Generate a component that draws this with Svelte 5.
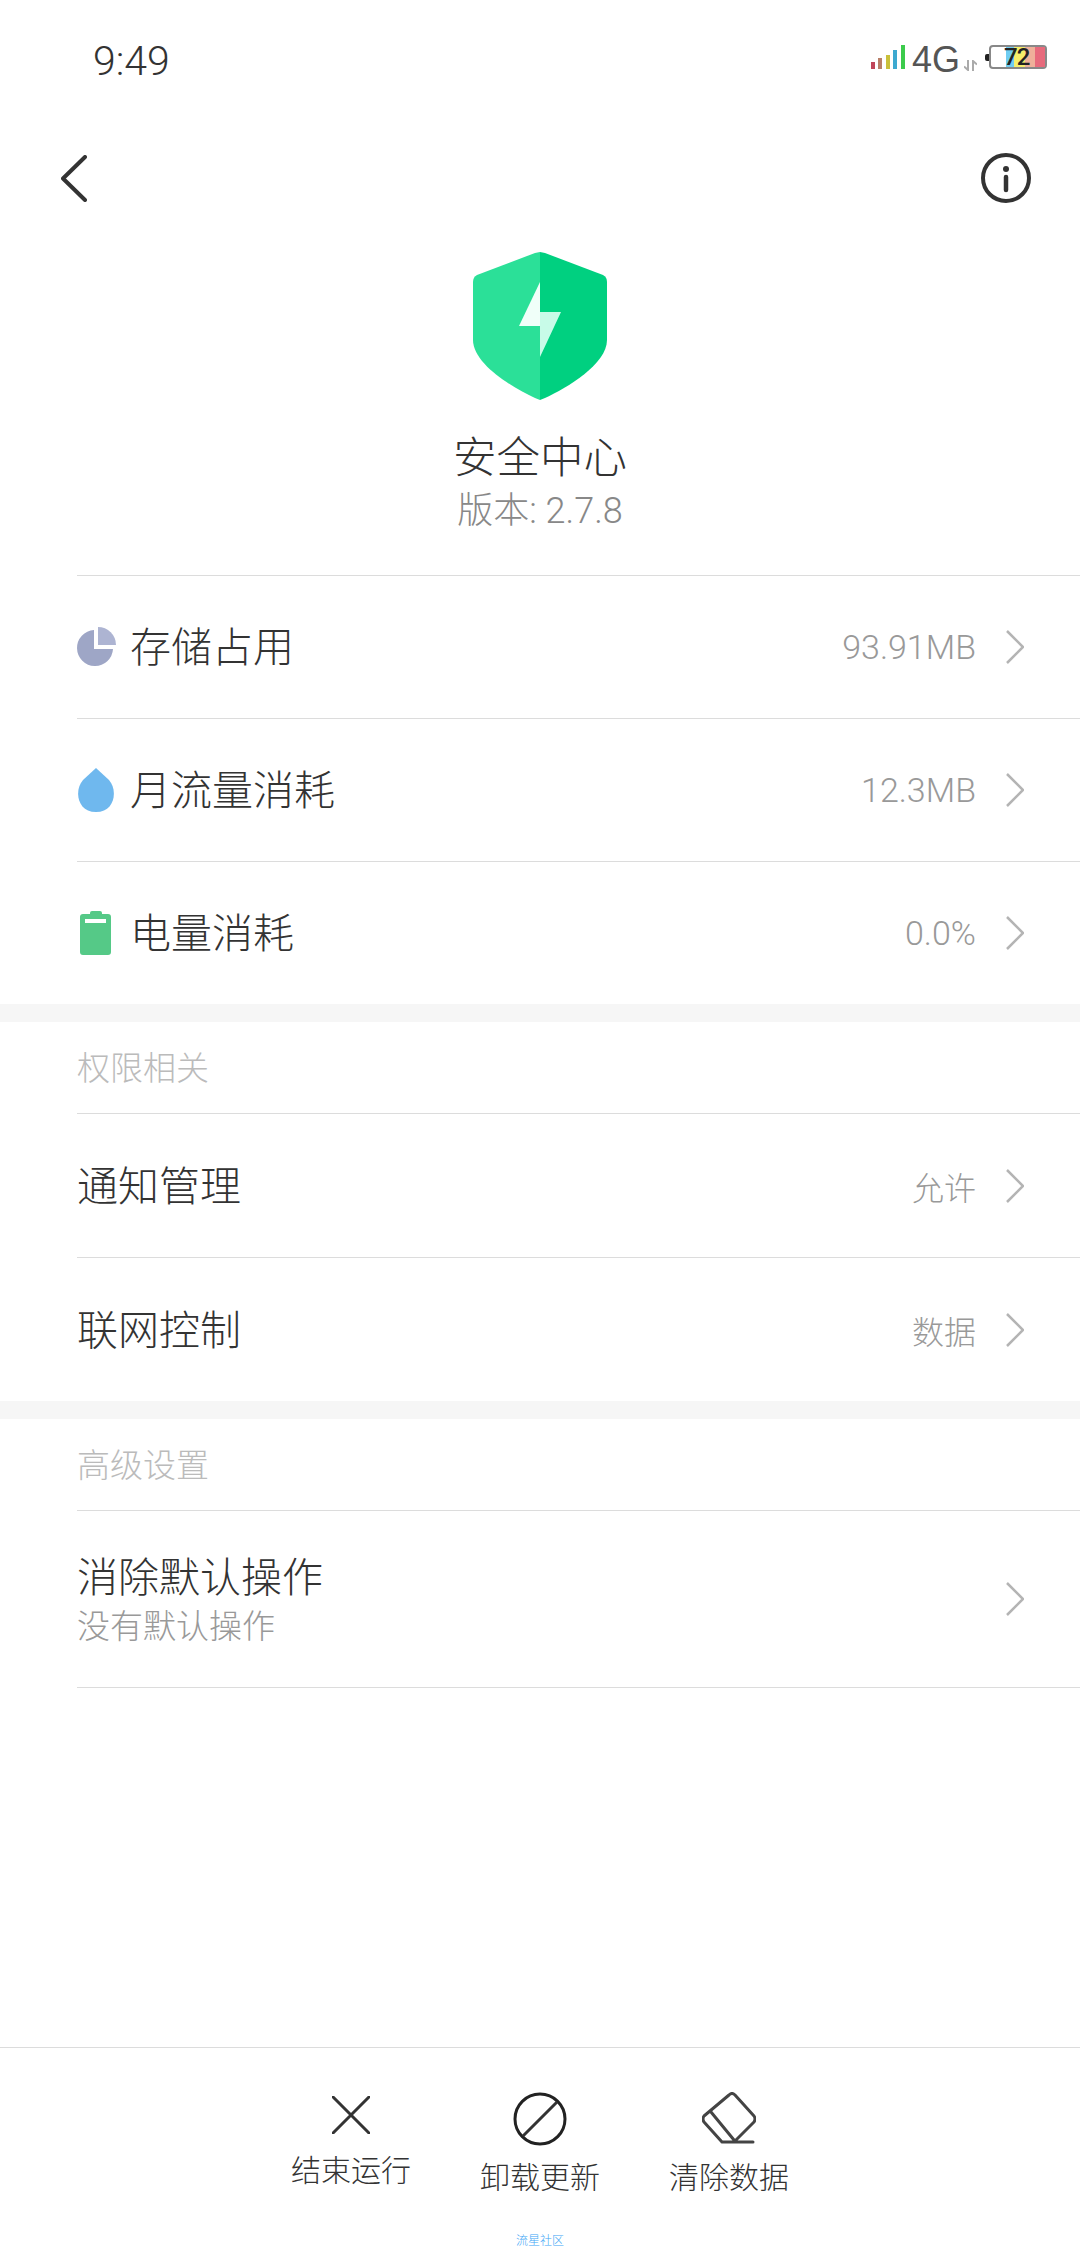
<script>
  const sections = [
    {
      rows: [
        { icon: "pie", title: "存储占用", value: "93.91MB" },
        { icon: "drop", title: "月流量消耗", value: "12.3MB" },
        { icon: "battery", title: "电量消耗", value: "0.0%" }
      ]
    },
    {
      header: "权限相关",
      rows: [
        { title: "通知管理", value: "允许", cjk: true },
        { title: "联网控制", value: "数据", cjk: true }
      ]
    },
    {
      header: "高级设置",
      rows: [{ title: "消除默认操作", sub: "没有默认操作" }]
    }
  ];
</script>

<div class="page">
  <div class="status">
    <span class="time">9:49</span>
    <div class="status-right">
      <svg class="signal" width="34" height="24" viewBox="0 0 34 24">
        <rect x="0" y="17" width="4" height="7" fill="#c0455a" />
        <rect x="7" y="13" width="4" height="11" fill="#b87f68" />
        <rect x="15" y="10" width="4" height="14" fill="#c9c03a" />
        <rect x="22" y="5" width="4" height="19" fill="#3da9d0" />
        <rect x="30" y="0" width="4" height="24" fill="#3ccb4c" />
      </svg>
      <span class="net">4G</span>
      <svg class="arrows" width="13" height="11" viewBox="0 0 13 11">
        <path d="M4 0v10L0 6.500M9 11V1l4 3.500" fill="none" stroke="#aaa" stroke-width="2" />
      </svg>
      <span class="nub"></span>
      <div class="batt">
        <i class="b1"></i><i class="b2"></i><i class="b3"></i><i class="b4"></i>
        <span class="level">72</span>
      </div>
    </div>
  </div>

  <div class="toolbar">
    <svg width="26" height="47" viewBox="0 0 26 47">
      <path d="M24 2 2 23.500 24 45" fill="none" stroke="#333" stroke-width="4" stroke-linecap="round" stroke-linejoin="round" />
    </svg>
    <svg width="50" height="50" viewBox="0 0 50 50">
      <circle cx="25" cy="25" r="23" fill="none" stroke="#333" stroke-width="4" />
      <circle cx="25" cy="16" r="3" fill="#333" />
      <path d="M25 24v13" stroke="#333" stroke-width="4.500" stroke-linecap="round" />
    </svg>
  </div>

  <div class="hero">
    <svg width="134" height="148" viewBox="0 0 134 148">
      <path d="M67 0 62 1 4 23Q0 25 0 30V88C0 112 40 136 62 146L67 148Z" fill="#2be098" />
      <path d="M67 0 72 1 130 23Q134 25 134 30V88C134 112 94 136 72 146L67 148Z" fill="#00d080" />
      <path d="M67 30 46 74H67Z" fill="#f0fff9" />
      <path d="M67 105 88 60H67Z" fill="#c8fbe8" />
    </svg>
    <div class="app-name">安全中心</div>
    <div class="version">版本: 2.7.8</div>
  </div>

  {#each sections as section, i}
    {#if i > 0}
      <div class="band"></div>
    {/if}
    {#if section.header}
      <div class="section-head">{section.header}</div>
    {/if}
    <div class="list" class:tall={i > 0}>
      {#each section.rows as row}
        <div class="row" class:with-sub={row.sub}>
          {#if row.icon === "pie"}
            <svg class="row-icon" width="40" height="40" viewBox="0 0 40 40">
              <path d="M18 3A18 18 0 1 0 37 22H18Z" fill="#9ea6c6" />
              <path d="M22 0A18 18 0 0 1 40 18H22Z" fill="#adb4d2" />
            </svg>
          {:else if row.icon === "drop"}
            <svg class="row-icon" width="40" height="46" viewBox="0 0 40 46">
              <path d="M20 1 7 13C-2 23 1 45 20 45 39 45 42 23 33 13Z" fill="#6fb8ee" />
            </svg>
          {:else if row.icon === "battery"}
            <svg class="row-icon" width="40" height="46" viewBox="0 0 40 46">
              <path d="M14 3Q14 1 16 1H24Q26 1 26 3V4H32Q35 4 35 7V42Q35 45 32 45H7Q4 45 4 42V7Q4 4 7 4H14Z" fill="#55c987" />
              <rect x="9" y="9" width="21" height="4" fill="#fff" />
            </svg>
          {/if}
          <div class="row-text" class:icon-gap={row.icon}>
            <div class="row-title">{row.title}</div>
            {#if row.sub}
              <div class="row-sub">{row.sub}</div>
            {/if}
          </div>
          {#if row.value}
            <span class="row-value" class:cjk={row.cjk}>{row.value}</span>
          {/if}
          <svg class="chevron" width="18" height="34" viewBox="0 0 18 34">
            <path d="M1 1 17 17 1 33" fill="none" stroke="#b4b4b4" stroke-width="2.500" />
          </svg>
        </div>
      {/each}
    </div>
  {/each}

  <div class="actions">
    <div class="action first">
      <svg width="38" height="38" viewBox="0 0 38 38">
        <path d="M1 1 37 37M37 1 1 37" stroke="#333" stroke-width="3" stroke-linecap="round" />
      </svg>
      <span>结束运行</span>
    </div>
    <div class="action">
      <svg width="54" height="54" viewBox="0 0 54 54">
        <circle cx="27" cy="27" r="25" fill="none" stroke="#222" stroke-width="3" />
        <path d="M10 44 44 10" stroke="#333" stroke-width="3" />
      </svg>
      <span>卸载更新</span>
    </div>
    <div class="action">
      <svg width="54" height="54" viewBox="0 0 54 54">
        <path d="M27 3Q30 0 33 3L52 24Q54 27 52 30L32 50H20L2 30Q0 27 2 24ZM9 20 32 48M20 50H51" fill="none" stroke="#444" stroke-width="3" stroke-linecap="round" stroke-linejoin="round" />
      </svg>
      <span>清除数据</span>
    </div>
  </div>
  <div class="mark">流星社区</div>
</div>

<style>
  :global(body) {
    margin: 0;
    background: #fff;
  }

  .page {
    width: 1080px;
    height: 2248px;
    display: flex;
    flex-direction: column;
    overflow: hidden;
    font-family: Roboto, "Noto Sans CJK SC", sans-serif;
    font-weight: 300;
    color: #333;
  }

  .status {
    height: 88px;
    box-sizing: border-box;
    padding: 37px 33px 0 93px;
    display: flex;
    justify-content: space-between;
  }

  .time {
    font-size: 41px;
    line-height: 48px;
    font-weight: 300;
  }

  .status-right {
    display: flex;
    align-items: flex-start;
    padding-top: 8px;
  }

  .net {
    font-family: "Liberation Sans", sans-serif;
    font-size: 36px;
    line-height: 26px;
    margin-top: 2px;
    margin-left: 7px;
    width: 50px;
    font-weight: 400;
    color: #555;
  }

  .arrows {
    margin: 15px 0 0 2px;
  }

  .nub {
    width: 4px;
    height: 7px;
    margin: 9px 0 0 8px;
    background: #222;
    border-radius: 2px 0 0 2px;
  }

  .batt {
    position: relative;
    width: 58px;
    height: 24px;
    box-sizing: border-box;
    border: 2px solid #888;
    border-radius: 4px;
    background: #fff;
  }

  .batt i {
    position: absolute;
    top: 0;
    bottom: 0;
  }

  .b1 {
    left: 15px;
    width: 8px;
    background: #6fcdf2;
  }

  .b2 {
    left: 23px;
    width: 11px;
    background: #f5ee6a;
  }

  .b3 {
    left: 34px;
    width: 10px;
    background: #efb09a;
  }

  .b4 {
    left: 44px;
    width: 10px;
    background: #e76a7c;
  }

  .level {
    position: absolute;
    left: 13px;
    top: 0;
    font-size: 24px;
    line-height: 20px;
    font-weight: 500;
    color: #222;
    letter-spacing: -1px;
  }

  .toolbar {
    display: flex;
    justify-content: space-between;
    align-items: center;
    height: 50px;
    padding: 65px 49px 0 61px;
  }

  .hero {
    height: 372px;
    box-sizing: border-box;
    padding-top: 49px;
    display: flex;
    flex-direction: column;
    align-items: center;
  }

  .app-name {
    font-size: 43.500px;
    line-height: 50px;
    margin-top: 34px;
  }

  .version {
    font-size: 36px;
    line-height: 40px;
    margin-top: 7px;
    color: #888;
  }

  .band {
    height: 18px;
    background: #f6f6f6;
  }

  .section-head {
    height: 91px;
    box-sizing: border-box;
    padding: 27px 0 0 77px;
    font-size: 33px;
    line-height: 40px;
    color: #bbb;
  }

  .list {
    display: flex;
    flex-direction: column;
  }

  .row {
    margin-left: 77px;
    height: 143px;
    box-sizing: border-box;
    border-top: 1px solid #dcdcdc;
    padding-right: 56px;
    display: flex;
    align-items: center;
  }

  .tall .row {
    height: 144px;
  }

  .tall .row.with-sub {
    height: 178px;
    border-bottom: 1px solid #dcdcdc;
  }

  .row-icon {
    margin-left: -1px;
    flex: none;
  }

  .row-text {
    flex: 1;
    padding-top: 2px;
  }

  .row-text.icon-gap {
    margin-left: 14px;
  }

  .row-title {
    font-size: 41px;
    line-height: 48px;
  }

  .row-sub {
    font-size: 33px;
    line-height: 40px;
    color: #999;
    margin-top: 5px;
  }

  .row-value {
    font-size: 34px;
    color: #999;
    margin-right: 30px;
  }

  .row-value.cjk {
    font-size: 32px;
  }

  .actions {
    margin-top: auto;
    height: 152px;
    box-sizing: border-box;
    border-top: 1px solid #dcdcdc;
    padding-top: 44px;
    display: flex;
    justify-content: center;
  }

  .action {
    width: 189px;
    display: flex;
    flex-direction: column;
    align-items: center;
    font-size: 30px;
    line-height: 36px;
  }

  .action svg {
    margin-bottom: 14px;
  }

  .action.first svg {
    margin: 4px 0 19px;
  }

  .mark {
    height: 49px;
    box-sizing: border-box;
    padding-top: 35px;
    text-align: center;
    font-size: 12px;
    line-height: 14px;
    color: #3ea6f5;
  }
</style>
